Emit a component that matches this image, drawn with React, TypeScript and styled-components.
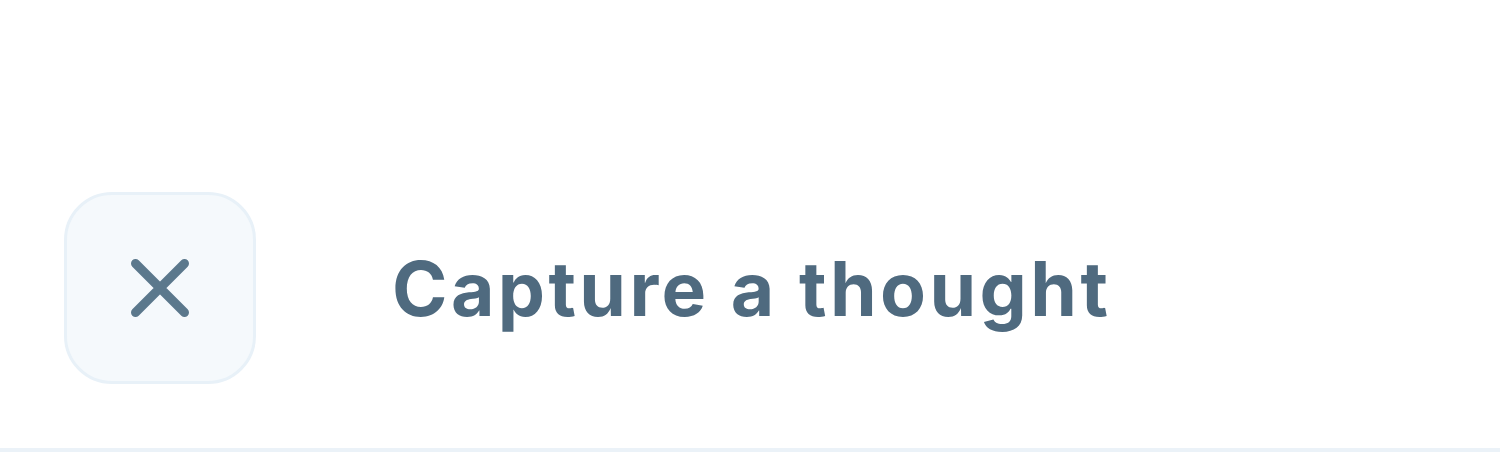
import React from "react";
import styled, { createGlobalStyle } from "styled-components";

const Global = createGlobalStyle`
  html, body { margin: 0; padding: 0; background: #ffffff; }
  body { font-family: "Inter", "Noto Sans", sans-serif; }
`;

const Header = styled.header`
  box-sizing: border-box;
  height: 452px;
  display: flex;
  align-items: center;
  padding: 192px 64px 64px 64px;
  border-bottom: 4px solid #ebf2f8;
  background: #ffffff;
`;

const CloseButton = styled.button`
  box-sizing: border-box;
  width: 192px;
  height: 192px;
  flex: none;
  display: flex;
  align-items: center;
  justify-content: center;
  padding: 0;
  background: #f5f9fc;
  border: 3px solid #e8f1f8;
  border-radius: 48px;
  cursor: pointer;
`;

const Title = styled.h1`
  margin: 0 0 0 136px;
  font-family: "Inter", "Noto Sans", sans-serif;
  font-weight: 700;
  font-size: 75px;
  line-height: 1;
  color: #4f6a7f;
  letter-spacing: 3.4px;
`;

export default function App() {
  return (
    <>
      <Global />
      <Header>
        <CloseButton aria-label="Close">
          <svg width="58" height="58" viewBox="0 0 58 58" fill="none">
            <path
              d="M4.5 4.5 L53.5 53.5 M53.5 4.5 L4.5 53.5"
              stroke="#5b788c"
              strokeWidth="9"
              strokeLinecap="round"
            />
          </svg>
        </CloseButton>
        <Title>Capture a thought</Title>
      </Header>
    </>
  );
}
